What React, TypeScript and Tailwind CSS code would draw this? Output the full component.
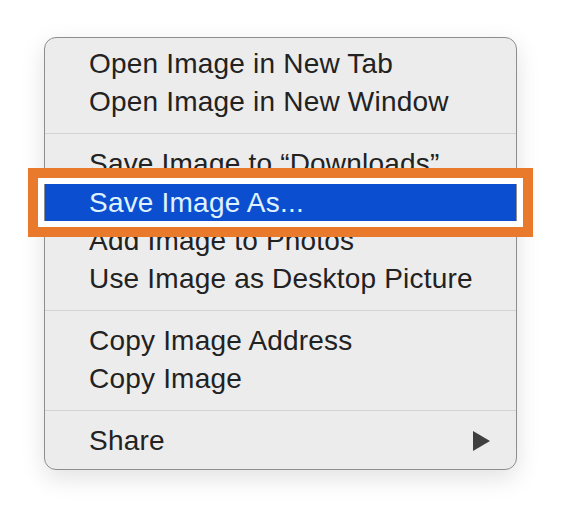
import React from 'react';

type Item = { label: string; active?: boolean; submenu?: boolean } | 'sep';

const items: Item[] = [
    { label: 'Open Image in New Tab' },
    { label: 'Open Image in New Window' },
    'sep',
    { label: 'Save Image to \u201cDownloads\u201d' },
    { label: 'Save Image As...', active: true },
    { label: 'Add Image to Photos' },
    { label: 'Use Image as Desktop Picture' },
    'sep',
    { label: 'Copy Image Address' },
    { label: 'Copy Image' },
    'sep',
    { label: 'Share', submenu: true },
];

export default function App() {
    return (
        <div className="w-[562px] h-[522px] bg-white pt-[37px] pl-[44px] font-['Liberation_Sans',Arial,sans-serif]">
            <div className="relative w-[473px]">
                {/* Context menu */}
                <div className="w-[473px] rounded-[12px] border border-[#8e8e8e] bg-[#ececec] pt-[7px] pb-[9px] shadow-[0_8px_24px_rgba(0,0,0,0.12)]">
                    {items.map((item, i) =>
                        item === 'sep' ? (
                            <div key={i} className="flex h-[24px] items-center">
                                <div className="h-px w-full bg-[#d3d3d3]" />
                            </div>
                        ) : (
                            <div
                                key={i}
                                className={`flex items-center justify-between pl-[44px] pr-[26px] text-[28px] leading-none tracking-[0.2px] ${
                                    item.active ? 'h-[39px] bg-[#0b4fd0] text-[#dff2ff]' : 'h-[38px] text-[#222222]'
                                }`}
                            >
                                <span>{item.label}</span>
                                {item.submenu && (
                                    <svg width="17" height="20" viewBox="0 0 17 20">
                                        <path d="M0 0 L17 10 L0 20 Z" fill="#3f3f3f" />
                                    </svg>
                                )}
                            </div>
                        )
                    )}
                </div>

                {/* Orange highlight frame */}
                <div className="absolute left-[-16px] top-[131px] w-[505px] h-[69px] border-[10px] border-[#e97a2b] shadow-[inset_0_0_0_6px_#ffffff]" />
            </div>
        </div>
    );
}
